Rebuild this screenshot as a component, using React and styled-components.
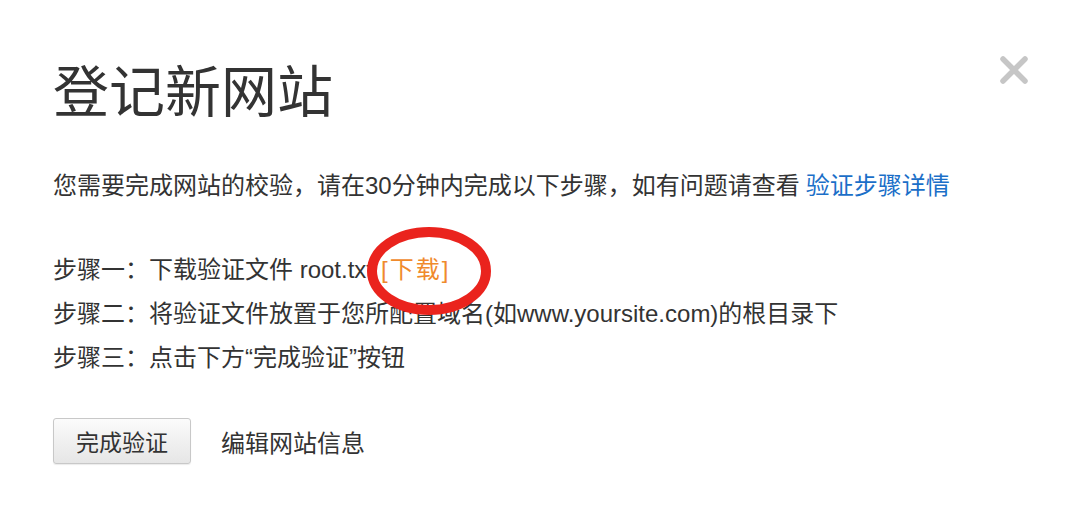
import React from 'react'
import styled, { createGlobalStyle } from 'styled-components'

const GlobalStyle = createGlobalStyle`
    body {
        margin: 0;
        background: #fff;
        font-family: "Liberation Sans", "Noto Sans CJK SC", sans-serif;
        color: #333;
    }
`

const Dialog = styled.div`
    position: relative;
    width: 1090px;
    height: 510px;
    box-sizing: border-box;
    padding: 59px 53px;
    background: #fff;
`

const Title = styled.h1`
    margin: 0;
    font-size: 56px;
    line-height: 68px;
    font-weight: normal;
    color: #333;
`

const Close = styled.button`
    position: absolute;
    top: 55px;
    right: 61px;
    width: 30px;
    height: 30px;
    padding: 0;
    border: none;
    background: none;
    cursor: pointer;
`

const Intro = styled.p`
    margin: 41px 0 0;
    font-size: 24px;
    line-height: 36px;
`

const Link = styled.a`
    color: ${props => props.orange ? '#f08a2c' : '#1b6fc8'};
    text-decoration: none;
    margin-left: ${props => props.gap || 0}px;
    letter-spacing: ${props => props.orange ? '2px' : 'normal'};
`

const Steps = styled.div`
    position: relative;
    margin-top: 44px;
    display: flex;
    flex-direction: column;
`

const Step = styled.div`
    font-size: 24px;
    line-height: 44px;
    white-space: nowrap;
`

const Circle = styled.svg`
    position: absolute;
    left: 308px;
    top: -25px;
    pointer-events: none;
`

const Actions = styled.div`
    margin-top: 38px;
    display: flex;
    align-items: center;
    gap: 30px;
`

const Button = styled.button`
    height: 46px;
    padding: 0 22px;
    font-family: inherit;
    font-size: 23px;
    color: #333;
    border: 1px solid #c8c8c8;
    border-radius: 3px;
    background: linear-gradient(#fbfbfb, #e6e6e6);
    box-shadow: 0 1px 1px rgba(0, 0, 0, 0.08);
`

const TextAction = styled.span`
    font-size: 24px;
    color: #333;
`

const App = () => {
    return (
        <Dialog>
            <GlobalStyle />
            <Title>登记新网站</Title>
            <Close aria-label="close">
                <svg width="30" height="30" viewBox="0 0 30 30">
                    <path d="M4 4 L26 26 M26 4 L4 26" stroke="#c6c6c6" strokeWidth="5.5" strokeLinecap="round" />
                </svg>
            </Close>
            <Intro>
                您需要完成网站的校验，请在30分钟内完成以下步骤，如有问题请查看
                <Link href="#" gap={6}>验证步骤详情</Link>
            </Intro>
            <Steps>
                <Step>步骤一：下载验证文件 root.txt<Link href="#" orange gap={8}>[下载]</Link></Step>
                <Step>步骤二：将验证文件放置于您所配置域名(如www.yoursite.com)的根目录下</Step>
                <Step>步骤三：点击下方“完成验证”按钮</Step>
                <Circle width="136" height="96" viewBox="0 0 136 96">
                    <ellipse cx="68" cy="48" rx="57" ry="39" fill="none" stroke="#ea231d" strokeWidth="10" />
                </Circle>
            </Steps>
            <Actions>
                <Button>完成验证</Button>
                <TextAction>编辑网站信息</TextAction>
            </Actions>
        </Dialog>
    )
}

export default App
